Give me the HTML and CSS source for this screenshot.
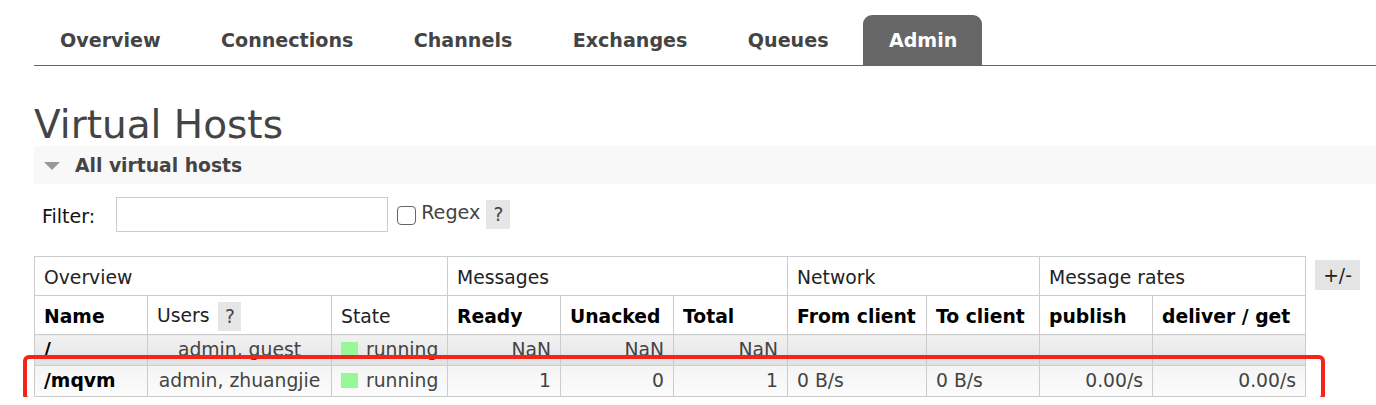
FILE: index.html
```html
<!DOCTYPE html>
<html>
<head>
<meta charset="utf-8">
<title>Virtual Hosts</title>
<link rel="stylesheet" href="styles.css">
</head>
<body>
<div class="page">
  <nav class="tabs">
    <a class="tab">Overview</a>
    <a class="tab">Connections</a>
    <a class="tab">Channels</a>
    <a class="tab">Exchanges</a>
    <a class="tab">Queues</a>
    <a class="tab active">Admin</a>
  </nav>
  <h1 class="title">Virtual Hosts</h1>
  <div class="section-head">
    <span class="tri"></span>
    <span class="section-title">All virtual hosts</span>
  </div>
  <div class="filter">
    <label class="filter-label">Filter:</label>
    <input class="filter-input" type="text">
    <span class="check"></span>
    <span class="regex">Regex</span>
    <span class="help">?</span>
  </div>
  <div class="table-row">
    <div class="table-wrap">
      <table class="list">
        <colgroup>
          <col class="c-name"><col class="c-users"><col class="c-state">
          <col class="c-num"><col class="c-num"><col class="c-num2">
          <col class="c-from"><col class="c-num"><col class="c-num"><col class="c-dg">
        </colgroup>
        <thead>
          <tr class="group">
            <th colspan="3">Overview</th>
            <th colspan="3">Messages</th>
            <th colspan="2">Network</th>
            <th colspan="2">Message rates</th>
          </tr>
          <tr class="cols">
            <th class="b">Name</th>
            <th>Users <span class="help small">?</span></th>
            <th>State</th>
            <th class="b">Ready</th>
            <th class="b">Unacked</th>
            <th class="b">Total</th>
            <th class="b">From client</th>
            <th class="b">To client</th>
            <th class="b">publish</th>
            <th class="b">deliver / get</th>
          </tr>
        </thead>
        <tbody>
          <tr class="alt1">
            <td class="name">/</td>
            <td class="ctr">admin, guest</td>
            <td><span class="dot"></span>running</td>
            <td class="r">NaN</td>
            <td class="r">NaN</td>
            <td class="r">NaN</td>
            <td></td><td></td><td></td><td></td>
          </tr>
          <tr class="alt2">
            <td class="name">/mqvm</td>
            <td class="ctr">admin, zhuangjie</td>
            <td><span class="dot"></span>running</td>
            <td class="r">1</td>
            <td class="r">0</td>
            <td class="r">1</td>
            <td>0 B/s</td>
            <td>0 B/s</td>
            <td class="r">0.00/s</td>
            <td class="r">0.00/s</td>
          </tr>
        </tbody>
      </table>
      <div class="highlight"></div>
    </div>
    <span class="plusminus">+/-</span>
  </div>
</div>
</body>
</html>
```

FILE: styles.css
```css
html, body {
  margin: 0;
  padding: 0;
  background: #fff;
}
body {
  font-family: "DejaVu Sans", Verdana, sans-serif;
  font-size: 18.75px;
  color: #444;
  overflow: hidden;
}
.page {
  padding: 15px 0 0 34px;
}
.tabs {
  display: flex;
  align-items: flex-end;
  height: 50px;
  border-bottom: 1px solid #666;
}
.tab {
  display: flex;
  align-items: center;
  height: 50px;
  padding: 0 26px;
  margin-right: 8.4px;
  box-sizing: border-box;
  font-weight: bold;
  color: #444;
  font-size: 19.1px;
  border-radius: 9px 9px 0 0;
}
.tab.active {
  background: #666;
  color: #fff;
  padding: 0 25px 0 26px;
}
.title {
  margin: 0;
  font-weight: normal;
  font-size: 39px;
  color: #444;
  line-height: 1;
  padding-top: 39px;
  height: 41px;
}
.section-head {
  display: flex;
  align-items: center;
  height: 38px;
  background: #f8f8f8;
}
.tri {
  width: 0;
  height: 0;
  border-left: 8px solid transparent;
  border-right: 8px solid transparent;
  border-top: 8px solid #999;
  margin: 2px 15px 0 10px;
}
.section-title {
  font-weight: bold;
  color: #444;
}
.filter {
  display: flex;
  align-items: center;
  height: 34px;
  margin-top: 13px;
  padding-left: 8px;
}
.filter-label {
  color: #111;
  margin-right: 21px;
  margin-top: 4px;
  font-size: 19px;
}
.filter-input {
  width: 272px;
  height: 35px;
  box-sizing: border-box;
  border: 1px solid #ccc;
  margin: 0;
  padding: 0;
  font: inherit;
}
.check {
  width: 19px;
  height: 19px;
  border: 1.5px solid #666;
  border-radius: 4px;
  margin: 2px 5px 0 9px;
  box-sizing: border-box;
  background: #fff;
}
.regex {
  color: #444;
  font-size: 19.2px;
  margin-top: -3px;
}
.help {
  display: inline-flex;
  align-items: center;
  justify-content: center;
  background: #e6e6e6;
  color: #444;
  width: 24px;
  height: 29px;
  margin-left: 6px;
}
.help.small {
  width: 23px;
  height: 29px;
  margin-left: 3px;
  font-weight: normal;
}
.table-row {
  display: flex;
  align-items: flex-start;
  margin-top: 25px;
}
.table-wrap {
  position: relative;
}
.list {
  border-collapse: collapse;
  table-layout: fixed;
  width: 1272px;
}
.c-name { width: 113px; }
.c-users { width: 184px; }
.c-state { width: 116px; }
.c-num { width: 113px; }
.c-num2 { width: 114px; }
.c-from { width: 139px; }
.c-dg { width: 153px; }
.list th, .list td {
  border: 1px solid #ccc;
  padding: 2px 9px 0;
  text-align: left;
  white-space: nowrap;
  overflow: hidden;
}
.list th {
  font-weight: normal;
  color: #222;
}
.group th {
  height: 36px;
}
.cols th {
  height: 35px;
  padding-top: 3px;
}
.cols th.b {
  font-weight: bold;
  color: #000;
}
.cols th .help {
  vertical-align: middle;
}
.list td {
  color: #444;
}
.alt1 td {
  height: 28px;
  padding-top: 1px;
  padding-bottom: 1px;
  background: linear-gradient(#f2f2f2, #e2e2e2);
  line-height: 28px;
}
.alt2 td {
  height: 30px;
  padding-top: 0;
  background: linear-gradient(#f4f4f4, #fcfcfc);
  line-height: 30px;
}
.list td.name {
  font-weight: bold;
  color: #000;
}
.list td.ctr {
  text-align: center;
  padding-left: 4px;
  padding-right: 4px;
}
.list td.r {
  text-align: right;
}
.dot {
  display: inline-block;
  width: 17px;
  height: 15px;
  background: #98f898;
  vertical-align: -1px;
  margin-right: 8px;
}
.plusminus {
  display: flex;
  align-items: center;
  justify-content: center;
  width: 45px;
  height: 30px;
  background: #e4e4e4;
  color: #222;
  margin: 4px 0 0 9px;
}
.highlight {
  position: absolute;
  left: -11px;
  top: 99px;
  width: 1302px;
  height: 46px;
  box-sizing: border-box;
  border: 4px solid #f52318;
  border-radius: 6px;
}
```
